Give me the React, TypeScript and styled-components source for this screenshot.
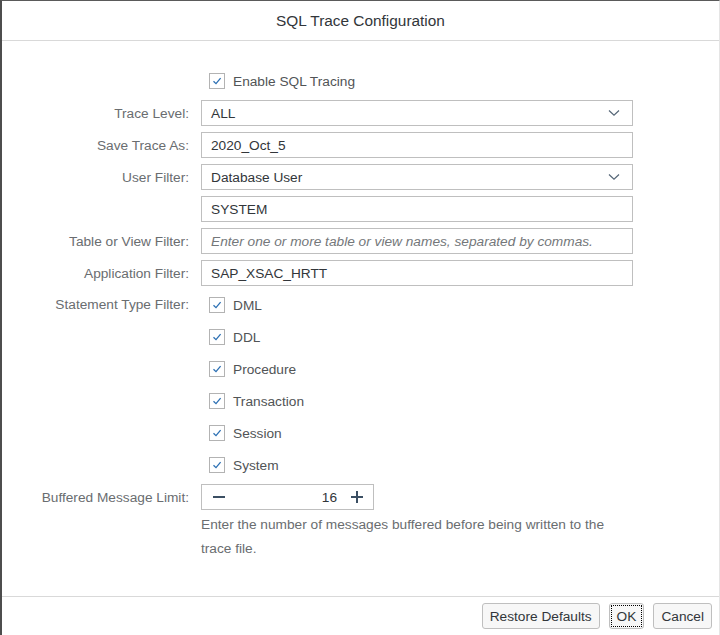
import React from 'react';
import styled, { createGlobalStyle } from 'styled-components';

const GlobalStyle = createGlobalStyle`
  html, body {
    margin: 0;
    padding: 0;
    background: #ffffff;
  }
  * {
    box-sizing: border-box;
  }
`;

const Dialog = styled.div`
  width: 720px;
  height: 635px;
  display: flex;
  flex-direction: column;
  background: #ffffff;
  border-top: 1px solid #5a5a5a;
  border-left: 2px solid #4d4d4d;
  border-right: 1px solid #e5e5e5;
  font-family: 'Liberation Sans', Arial, sans-serif;
  font-size: 13.7px;
  color: #32363a;
`;

const Header = styled.div`
  height: 40px;
  flex: none;
  display: flex;
  align-items: center;
  justify-content: center;
  border-bottom: 1px solid #d9d9d9;
  font-size: 15.4px;
  color: #32363a;
`;

const Content = styled.div`
  flex: 1;
  padding-top: 27px;
`;

const Form = styled.div`
  display: grid;
  grid-template-columns: 187px 432px;
  grid-auto-rows: minmax(26px, auto);
  column-gap: 12px;
  row-gap: 6px;
`;

const Label = styled.div<{ $span?: number }>`
  grid-column: 1;
  grid-row: ${p => (p.$span ? `span ${p.$span}` : 'auto')};
  display: flex;
  align-items: ${p => (p.$span ? 'flex-start' : 'center')};
  padding-top: ${p => (p.$span ? '5px' : '0')};
  justify-content: flex-end;
  color: #6a6d70;
  white-space: nowrap;
`;

const Field = styled.div`
  grid-column: 2;
  display: flex;
  align-items: center;
`;

const InputBox = styled.div<{ $placeholder?: boolean }>`
  width: 100%;
  height: 26px;
  display: flex;
  align-items: center;
  justify-content: space-between;
  padding: 0 12px 0 9px;
  border: 1px solid #bfbfbf;
  background: #ffffff;
  color: ${p => (p.$placeholder ? '#74777a' : '#32363a')};
  font-style: ${p => (p.$placeholder ? 'italic' : 'normal')};
  white-space: nowrap;
  overflow: hidden;
`;

const CheckRow = styled.label`
  display: flex;
  align-items: center;
  gap: 8px;
  padding-left: 8px;
  color: #515456;
`;

const Box = styled.span`
  width: 16px;
  height: 16px;
  display: inline-flex;
  align-items: center;
  justify-content: center;
  border: 1.5px solid #b3b3b3;
  background: #ffffff;
`;

const Stepper = styled.div`
  width: 173px;
  height: 26px;
  display: flex;
  align-items: center;
  border: 1px solid #bfbfbf;
  padding: 0 9px 0 10px;
`;

const StepValue = styled.span`
  flex: 1;
  text-align: right;
  padding-right: 13px;
  color: #32363a;
`;

const Help = styled.div`
  grid-column: 2;
  margin-top: -3px;
  color: #6a6d70;
  line-height: 24px;
`;

const Footer = styled.div`
  height: 39px;
  flex: none;
  display: flex;
  align-items: center;
  justify-content: flex-end;
  gap: 9px;
  padding: 0 7px 0 0;
  border-top: 1px solid #d9d9d9;
`;

const Button = styled.button<{ $focused?: boolean }>`
  height: 26px;
  padding: 0 7px;
  font-family: 'Liberation Sans', Arial, sans-serif;
  font-size: 13.7px;
  color: #32363a;
  background: #f7f7f7;
  border: 1px solid #bfbfbf;
  border-radius: 3px;
  outline: ${p => (p.$focused ? '1px dotted #000' : 'none')};
  outline-offset: -3px;
`;

const Check = () => (
  <Box>
    <svg width="10" height="10" viewBox="0 0 10 10">
      <polyline points="1.5,5.2 4,7.6 8.6,2.2" fill="none" stroke="#2b6fb3" strokeWidth="1.3" />
    </svg>
  </Box>
);

const Chevron = () => (
  <svg width="12" height="8" viewBox="0 0 12 8">
    <polyline points="1,1.5 6,6.2 11,1.5" fill="none" stroke="#556677" strokeWidth="1.2" />
  </svg>
);

const StepIcon = ({ plus }: { plus?: boolean }) => (
  <svg width="14" height="14" viewBox="0 0 14 14">
    <line x1="1" y1="7" x2="13" y2="7" stroke="#3b4f63" strokeWidth="2" />
    {plus && <line x1="7" y1="1" x2="7" y2="13" stroke="#3b4f63" strokeWidth="2" />}
  </svg>
);

const statementTypes = ['DML', 'DDL', 'Procedure', 'Transaction', 'Session', 'System'];

export default function App() {
  return (
    <>
      <GlobalStyle />
      <Dialog>
        <Header>SQL Trace Configuration</Header>
        <Content>
          <Form>
            <Field>
              <CheckRow>
                <Check />
                Enable SQL Tracing
              </CheckRow>
            </Field>

            <Label>Trace Level:</Label>
            <Field>
              <InputBox>
                ALL
                <Chevron />
              </InputBox>
            </Field>

            <Label>Save Trace As:</Label>
            <Field>
              <InputBox>2020_Oct_5</InputBox>
            </Field>

            <Label>User Filter:</Label>
            <Field>
              <InputBox>
                Database User
                <Chevron />
              </InputBox>
            </Field>

            <Field>
              <InputBox>SYSTEM</InputBox>
            </Field>

            <Label>Table or View Filter:</Label>
            <Field>
              <InputBox $placeholder>Enter one or more table or view names, separated by commas.</InputBox>
            </Field>

            <Label>Application Filter:</Label>
            <Field>
              <InputBox>SAP_XSAC_HRTT</InputBox>
            </Field>

            <Label $span={statementTypes.length}>Statement Type Filter:</Label>
            {statementTypes.map(t => (
              <Field key={t}>
                <CheckRow>
                  <Check />
                  {t}
                </CheckRow>
              </Field>
            ))}

            <Label>Buffered Message Limit:</Label>
            <Field>
              <Stepper>
                <StepIcon />
                <StepValue>16</StepValue>
                <StepIcon plus />
              </Stepper>
            </Field>

            <Help>Enter the number of messages buffered before being written to the trace file.</Help>
          </Form>
        </Content>
        <Footer>
          <Button>Restore Defaults</Button>
          <Button $focused>OK</Button>
          <Button>Cancel</Button>
        </Footer>
      </Dialog>
    </>
  );
}
